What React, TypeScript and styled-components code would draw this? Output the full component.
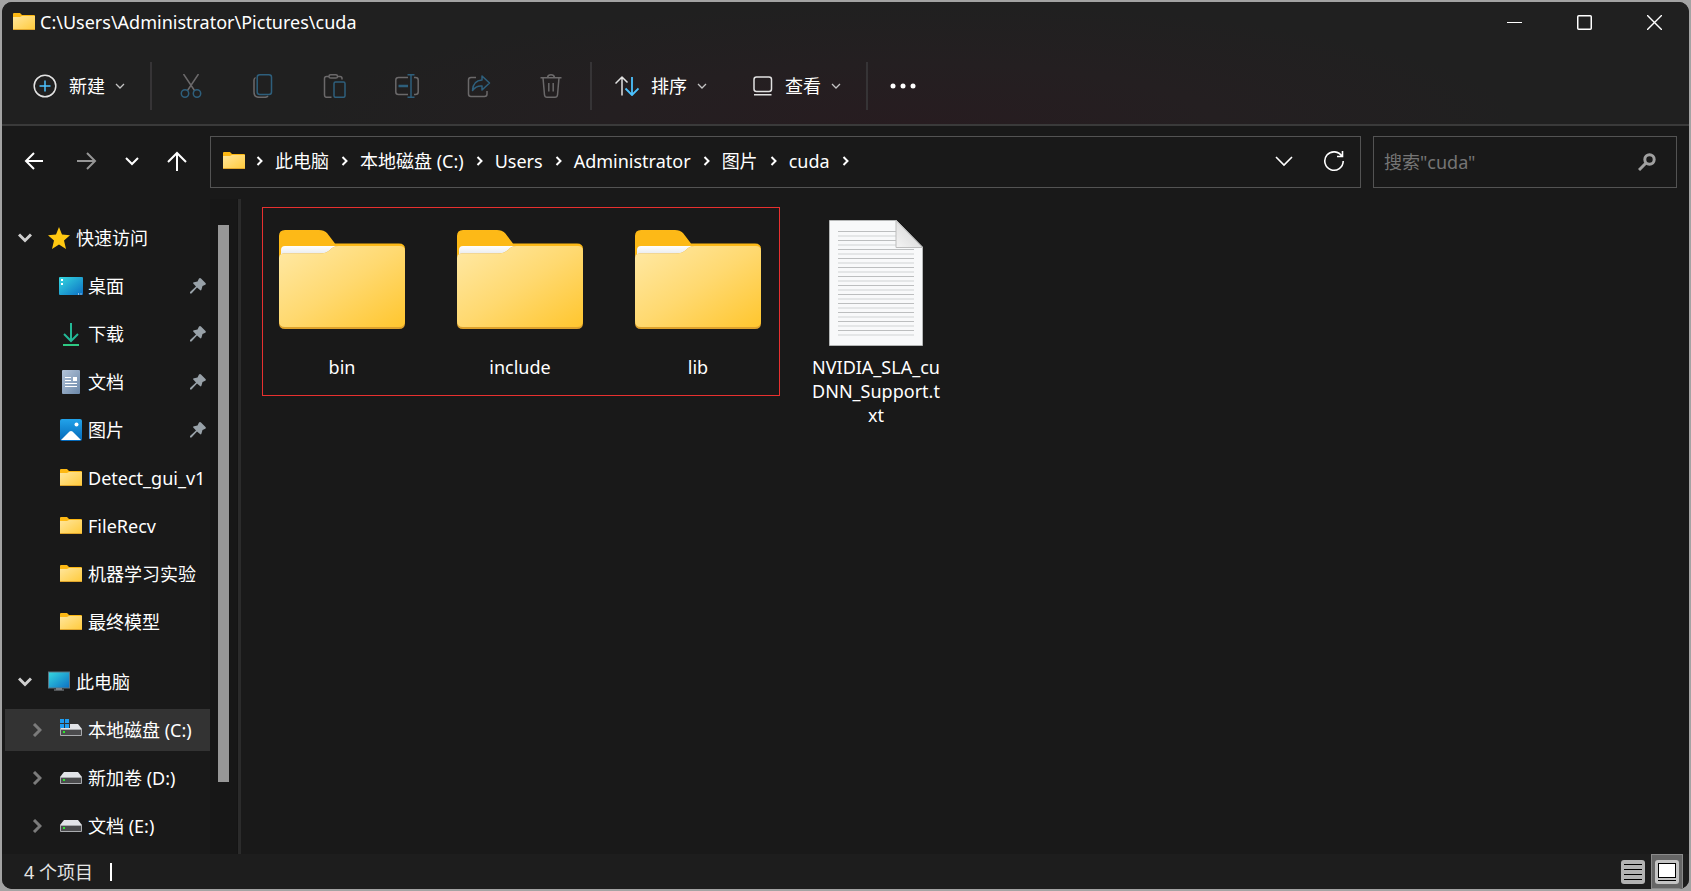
import React from "react";
import styled, { createGlobalStyle } from "styled-components";

const GlobalStyle = createGlobalStyle`
  * { box-sizing: border-box; }
  html, body { margin: 0; padding: 0; background: #a3a3a3; }
  body, button, input {
    font-family: "Noto Sans", "Noto Sans CJK SC", sans-serif;
    font-size: 18px;
    line-height: 24px;
    color: #fff;
  }
  button { background: none; border: 0; padding: 0; margin: 0; cursor: pointer; }
  ul, ol { list-style: none; margin: 0; padding: 0; }
  a { color: inherit; text-decoration: none; }
  svg { display: block; flex: none; }
`;

const Desktop = styled.div`
  display: flex;
  height: 100vh;
  padding: 2px;
`;

const Window = styled.div`
  flex: 1;
  min-width: 0;
  display: flex;
  flex-direction: column;
  background: #191919;
  border-radius: 10px;
  overflow: hidden;
`;

const Chrome = styled.header`
  background: radial-gradient(ellipse 36% 100% at 54% 100%, #271c20 0%, #241f21 50%, #202020 100%);
  border-bottom: 2px solid #3a3a3a;
`;

const TitleBar = styled.div`
  display: flex;
  align-items: center;
  height: 40px;
  padding-left: 11px;
`;

const Title = styled.h1`
  flex: 1;
  margin: 0 0 0 5px;
  font-size: 18px;
  font-weight: 400;
`;

const WindowButton = styled.button`
  display: flex;
  align-items: center;
  justify-content: center;
  width: 70px;
  height: 40px;
`;

const Toolbar = styled.div`
  display: flex;
  align-items: center;
  height: 82px;
  padding: 6px 0 0 31px;
`;

const MenuButton = styled.button<{ $gap: number }>`
  display: flex;
  align-items: center;
  gap: 10px;
  white-space: nowrap;
  > svg:first-child { margin-right: ${(p) => p.$gap}px; }
`;

const ToolGroup = styled.div`
  display: flex;
  gap: 48px;
  padding: 0 27px;
`;

const ViewGroup = styled.div`
  display: flex;
  gap: 44px;
  padding: 0 25px 0 23px;
`;

const Separator = styled.span<{ $before?: number }>`
  width: 2px;
  height: 48px;
  margin-left: ${(p) => p.$before ?? 0}px;
  background: #363436;
`;

const MoreButton = styled.button`
  margin-left: 22px;
`;

const AddressRow = styled.div`
  display: flex;
  align-items: center;
  padding: 10px 12px 11px 22px;
`;

const History = styled.div`
  display: flex;
  align-items: center;
  width: 186px;
  gap: 27px;
  padding-bottom: 2px;
`;

const AddressBox = styled.nav`
  flex: 1;
  min-width: 0;
  display: flex;
  align-items: center;
  height: 52px;
  padding: 0 15px 2px 12px;
  border: 1px solid #535353;
`;

const Crumbs = styled.ol`
  flex: 1;
  display: flex;
  align-items: center;
  white-space: nowrap;
`;

const Crumb = styled.li`
  display: flex;
  align-items: center;
  gap: 12px;
  margin-left: 12px;
  &:first-child { margin-left: 11px; }
`;

const AddressActions = styled.div`
  display: flex;
  align-items: center;
  gap: 30px;
`;

const SearchBox = styled.form`
  flex: 0 0 auto;
  width: 304px;
  min-width: 0;
  display: flex;
  align-items: center;
  height: 52px;
  margin-left: 12px;
  padding: 0 20px 0 10px;
  border: 1px solid #535353;
`;

const SearchInput = styled.input`
  flex: 1;
  width: 0;
  min-width: 0;
  padding: 0;
  border: 0;
  outline: 0;
  background: none;
  &::placeholder { color: #757575; opacity: 1; }
`;

const Body = styled.div`
  flex: 1;
  min-height: 0;
  display: flex;
`;

const Sidebar = styled.nav`
  flex: 0 0 208px;
  display: flex;
  flex-direction: column;
  gap: 18px;
  padding: 18px 0 0 3px;
  overflow: hidden;
`;

const TreeGroup = styled.ul`
  display: flex;
  flex-direction: column;
  gap: 6px;
`;

const TreeRow = styled.li<{ $level: number; $active?: boolean }>`
  display: grid;
  grid-template-columns: ${(p) => (p.$level === 0 ? "43px 22px" : "54px 24px")} 1fr auto;
  align-items: center;
  height: 42px;
  padding-right: 4px;
  background: ${(p) => (p.$active ? "#333333" : "transparent")};
  > a { margin-left: ${(p) => (p.$level === 0 ? 6 : 5)}px; white-space: nowrap; }
`;

const Toggle = styled.button<{ $level: number }>`
  display: flex;
  width: 20px;
  margin-left: ${(p) => (p.$level === 0 ? 13 : 27)}px;
`;

const IconCell = styled.span`
  display: flex;
  justify-content: center;
`;

const ScrollTrack = styled.div`
  flex: 0 0 27px;
  padding: 26px 8px 0;
  background: #171717;
`;

const ScrollThumb = styled.div`
  height: 88.5%;
  background: #979797;
`;

const Splitter = styled.div`
  flex: 0 0 4px;
  border-left: 1px solid #141414;
  background: #2b2b2b;
`;

const Files = styled.main`
  flex: 1;
  display: flex;
  align-items: flex-start;
  gap: 29px;
  padding: 8px 21px;
`;

const Highlight = styled.section`
  display: flex;
  gap: 44px;
  padding: 11px 14px 16px 12px;
  border: 1px solid #e8302f;
`;

const Loose = styled.section`
  padding-top: 12px;
`;

const FileItem = styled.a`
  display: flex;
  flex-direction: column;
  align-items: center;
  gap: 8px;
  width: 134px;
  text-align: center;
  > span { max-width: 100%; overflow-wrap: anywhere; }
`;

const StatusBar = styled.footer`
  display: flex;
  align-items: center;
  height: 35px;
  padding: 0 6px 0 22px;
  background: #1d1d1d;
  color: #e4e4e4;
`;

const StatusMark = styled.span`
  width: 2px;
  height: 18px;
  margin-left: 17px;
  background: #fff;
`;

const ViewButton = styled.button<{ $on?: boolean }>`
  display: flex;
  align-items: center;
  justify-content: center;
  width: 32px;
  height: 35px;
  margin-left: 2px;
  border: 1px solid ${(p) => (p.$on ? "#8a8a8a" : "transparent")};
  background: ${(p) => (p.$on ? "#666666" : "none")};
`;

const Spacer = styled.span`
  flex: 1;
`;

const BLUE = "#4cc2ff";
const DIM = "#6b696a";
const DIM_BLUE = "#2e5f7c";

function SmallFolder() {
  return (
    <svg width="22" height="18" viewBox="0 0 22 18">
      <defs>
        <linearGradient id="small-folder" x1="0" y1="0" x2="1" y2="1">
          <stop offset="0" stopColor="#ffe69c" />
          <stop offset="1" stopColor="#ffca3a" />
        </linearGradient>
      </defs>
      <path d="M0 1Q0 0 1 0H7L9 2H21Q22 2 22 3V16H0Z" fill="#fdb813" />
      <path d="M0 4H7L9 3H22V16Q22 17 21 17H1Q0 17 0 16Z" fill="url(#small-folder)" />
      <path d="M0 16.5H22" stroke="#e0a52c" />
    </svg>
  );
}

function BigFolder() {
  return (
    <svg width="128" height="128" viewBox="0 0 128 128">
      <defs>
        <linearGradient id="folder-front" x1="0" y1="0" x2="1" y2="1">
          <stop offset="0" stopColor="#ffe9a6" />
          <stop offset="0.5" stopColor="#ffd970" />
          <stop offset="1" stopColor="#ffc62e" />
        </linearGradient>
        <linearGradient id="folder-paper" x1="0" y1="0" x2="0" y2="1">
          <stop offset="0" stopColor="#ffffff" />
          <stop offset="1" stopColor="#dcdfe4" />
        </linearGradient>
      </defs>
      <path d="M1 17Q1 11 7 11H41Q46 11 49 14L57 24.500H121Q127 24.500 127 30V60H1Z" fill="#fdb917" />
      <path d="M3 40V31Q3 27 7 27H60L50 36H3Z" fill="url(#folder-paper)" />
      <path d="M1 104V39Q1 34.500 6 34.500H42Q48 34.500 52 31L54 29Q57 27 60 27H122Q127 27 127 32V104Q127 110 121 110H7Q1 110 1 104Z" fill="#dda12c" />
      <path d="M1 102V39Q1 34.500 6 34.500H42Q48 34.500 52 31L54 29Q57 27 60 27H122Q127 27 127 32V102Q127 108 121 108H7Q1 108 1 102Z" fill="url(#folder-front)" />
    </svg>
  );
}

function TextDocument() {
  const rows = Array.from({ length: 12 }, (_, i) => 12.5 + i * 9);
  return (
    <svg width="128" height="128" viewBox="0 0 128 128">
      <defs>
        <linearGradient id="fold" x1="0" y1="1" x2="1" y2="0">
          <stop offset="0" stopColor="#f4f4f4" />
          <stop offset="1" stopColor="#cfcfcf" />
        </linearGradient>
      </defs>
      <path d="M17.500 1.500H84.500L110.500 28V126.500H17.500Z" fill="#f8f9fa" stroke="#b5b7b7" />
      {rows.map((y, i) => (
        <g key={y}>
          <path d={`M26 ${y}H${i < 2 ? 84 : 102}`} stroke="#bcbebf" />
          <path d={`M26 ${y + 4.5}H${i < 2 ? 84 : 102}`} stroke="#e4e6e7" strokeWidth="2" />
        </g>
      ))}
      <path d="M84 1.500V28.500H110.500Z" fill="url(#fold)" stroke="#bdbdbd" />
    </svg>
  );
}

function Drive({ system }: { system?: boolean }) {
  return (
    <svg width="22" height="24" viewBox="0 0 22 24">
      <path d="M4 6H18L22 11V12H0V11Z" fill="#e2e4e8" />
      <path d="M0.500 11.500H21.500V17.500H0.500Z" fill="#4b4b4d" stroke="#a9abae" />
      <rect x="3" y="13" width="2" height="2" fill="#2ee62e" />
      {system && (
        <>
          <rect x="0" y="0" width="10" height="10" fill="#333" />
          <path d="M0 1H4V5H0ZM5 1H9V5H5ZM0 6H4V10H0ZM5 6H9V10H5Z" fill="#1f9df0" />
        </>
      )}
    </svg>
  );
}

function Star() {
  return (
    <svg width="22" height="22" viewBox="0 0 22 22">
      <path d="M11 0L14 7.500L22 8.200L16 13.500L18 22L11 17.500L4 22L6 13.500L0 8.200L8 7.500Z" fill="#ffc811" />
    </svg>
  );
}

function Monitor() {
  return (
    <svg width="22" height="22" viewBox="0 0 22 22">
      <defs>
        <linearGradient id="screen" x1="0" y1="0" x2="1" y2="1">
          <stop offset="0" stopColor="#35d8e0" />
          <stop offset="1" stopColor="#0c6fc4" />
        </linearGradient>
      </defs>
      <rect x="0.500" y="1" width="21" height="16" fill="url(#screen)" stroke="#5d7482" />
      <path d="M8 17.500H14V18.500H8Z" fill="#b5bcc4" />
      <path d="M6 19H16" stroke="#8b9298" />
    </svg>
  );
}

function DesktopIcon() {
  return (
    <svg width="24" height="18" viewBox="0 0 24 18">
      <defs>
        <linearGradient id="wallpaper" x1="0" y1="0" x2="1" y2="1">
          <stop offset="0" stopColor="#35d8e0" />
          <stop offset="1" stopColor="#0c6fc4" />
        </linearGradient>
      </defs>
      <rect width="24" height="18" rx="1" fill="url(#wallpaper)" />
      <path d="M2 2H4V4H2ZM2 6H4V8H2Z" fill="#fff" />
      <path d="M19 17H20M21.500 17H22.500" stroke="#fff" />
    </svg>
  );
}

function Download() {
  return (
    <svg width="16" height="23" viewBox="0 0 16 23" fill="none" strokeWidth="2">
      <path d="M8 0V17M1 11L8 18L15 11" stroke="#23b896" />
      <path d="M0 22H16" stroke="#2ec983" />
    </svg>
  );
}

function DocumentIcon() {
  return (
    <svg width="18" height="24" viewBox="0 0 18 24">
      <defs>
        <linearGradient id="doc" x1="0" y1="0" x2="1" y2="1">
          <stop offset="0" stopColor="#b3c3d8" />
          <stop offset="1" stopColor="#6b88a9" />
        </linearGradient>
      </defs>
      <rect width="18" height="24" rx="1" fill="url(#doc)" />
      <path d="M3 7.500H9M3 10.500H9M3 13.500H15M3 16.500H15" stroke="#fff" />
      <rect x="11" y="7" width="4" height="4" fill="#fff" />
    </svg>
  );
}

function PictureIcon() {
  return (
    <svg width="22" height="22" viewBox="0 0 22 22">
      <defs>
        <linearGradient id="photo" x1="0" y1="0" x2="0" y2="1">
          <stop offset="0" stopColor="#22a3ea" />
          <stop offset="1" stopColor="#0468b8" />
        </linearGradient>
      </defs>
      <rect width="22" height="22" rx="2" fill="url(#photo)" />
      <circle cx="16.500" cy="5.500" r="2" fill="#fff" />
      <path d="M1 21L9.500 12.500Q11 11.500 12.500 12.500L21 21Z" fill="#fff" />
    </svg>
  );
}

function Pin() {
  return (
    <svg width="16" height="16" viewBox="0 0 16 16">
      <path d="M9 0.500Q10 -0.300 11 0.500L15.500 5Q16.300 6 15.300 6.800L12.500 8L11.500 11.500Q11 13 10 12L7 9.500L1.500 15.500H0V14L6 8.500L3.500 5.800Q2.500 4.500 4 4.200L7.500 3.500Z" fill="#98a1a8" />
    </svg>
  );
}

function Chevron({ color = "#c4c4c4" }: { color?: string }) {
  return (
    <svg width="10" height="8" viewBox="0 0 10 8" fill="none" stroke={color} strokeWidth="1.300">
      <path d="M1 2L5 6L9 2" />
    </svg>
  );
}

function CrumbArrow() {
  return (
    <svg width="7" height="10" viewBox="0 0 7 10" fill="none" stroke="#fff" strokeWidth="2">
      <path d="M1.500 1L5.500 5L1.500 9" />
    </svg>
  );
}

function TreeArrow({ open }: { open?: boolean }) {
  return open ? (
    <svg width="14" height="10" viewBox="0 0 14 10" fill="none" stroke="#cfcfcf" strokeWidth="3">
      <path d="M1 1.500L7 7.500L13 1.500" />
    </svg>
  ) : (
    <svg width="10" height="14" viewBox="0 0 10 14" fill="none" stroke="#7b7b7b" strokeWidth="3">
      <path d="M2 1L8 7L2 13" />
    </svg>
  );
}

function ToolIcon({ children }: { children: React.ReactNode }) {
  return (
    <svg width="24" height="24" viewBox="0 0 24 24" fill="none" strokeWidth="1.500" strokeLinejoin="round">
      {children}
    </svg>
  );
}

const tools = [
  {
    label: "剪切",
    icon: (
      <>
        <path d="M4.500 0L15.500 16.500M19.500 0L8.500 16.500" stroke={DIM} />
        <circle cx="6" cy="19.500" r="3.700" stroke={DIM_BLUE} />
        <circle cx="18" cy="19.500" r="3.700" stroke={DIM_BLUE} />
      </>
    ),
  },
  {
    label: "复制",
    icon: (
      <>
        <path d="M4.500 3.500Q3 4.500 3 6V18Q3 23.300 8 23.300H14Q16 23.300 17 22" stroke={DIM} />
        <rect x="6.200" y="0.800" width="14.300" height="19.700" rx="2.500" stroke={DIM_BLUE} />
      </>
    ),
  },
  {
    label: "粘贴",
    icon: (
      <>
        <path d="M6 2.500H3.500Q1.500 2.500 1.500 4.500V21Q1.500 23.300 3.500 23.300H8.500M14 2.500H17Q19 2.500 19 4.500V5.500" stroke={DIM} />
        <rect x="6" y="0.800" width="8.500" height="3.200" rx="1.600" stroke={DIM} />
        <rect x="11" y="8" width="11" height="15.300" rx="1.500" stroke={DIM_BLUE} />
      </>
    ),
  },
  {
    label: "重命名",
    icon: (
      <>
        <path d="M13 3.500H3.500Q0.800 3.500 0.800 6V18Q0.800 20.500 3.500 20.500H13M19 3.500H20.500Q23.200 3.500 23.200 6V18Q23.200 20.500 20.500 20.500H19" stroke={DIM} />
        <path d="M12.500 0.800H19.500M12.500 23.200H19.500M16 0.800V23.200" stroke={DIM_BLUE} />
        <path d="M3.500 12H13" stroke={DIM_BLUE} strokeWidth="2.500" />
      </>
    ),
  },
  {
    label: "共享",
    icon: (
      <>
        <path d="M9 3.500H4Q1.500 3.500 1.500 6V20Q1.500 22.500 4 22.500H17.500Q20 22.500 20 20V17" stroke={DIM} />
        <path d="M15 2L22.500 9L15 16V12Q9 11.500 5.500 16.500Q6 6.500 15 6Z" stroke={DIM_BLUE} />
      </>
    ),
  },
  {
    label: "删除",
    icon: (
      <path
        d="M1.500 3.800H22.500M4 3.800L5.500 21Q5.800 23.200 8 23.200H16Q18.200 23.200 18.500 21L20 3.800M8.500 3.500Q9 0.800 12 0.800T15.500 3.500M9.800 9V17.500M14.200 9V17.500"
        stroke={DIM}
      />
    ),
  },
];

const crumbs = ["此电脑", "本地磁盘 (C:)", "Users", "Administrator", "图片", "cuda"];

const quickAccess = [
  { name: "桌面", icon: <DesktopIcon />, pinned: true },
  { name: "下载", icon: <Download />, pinned: true },
  { name: "文档", icon: <DocumentIcon />, pinned: true },
  { name: "图片", icon: <PictureIcon />, pinned: true },
  { name: "Detect_gui_v1", icon: <SmallFolder /> },
  { name: "FileRecv", icon: <SmallFolder /> },
  { name: "机器学习实验", icon: <SmallFolder /> },
  { name: "最终模型", icon: <SmallFolder /> },
];

const drives = [
  { name: "本地磁盘 (C:)", system: true },
  { name: "新加卷 (D:)" },
  { name: "文档 (E:)" },
];

export default function App() {
  return (
    <>
      <GlobalStyle />
      <Desktop>
        <Window>
          <Chrome>
            <TitleBar>
              <SmallFolder />
              <Title>C:\Users\Administrator\Pictures\cuda</Title>
              <WindowButton aria-label="最小化">
                <svg width="15" height="15" stroke="#fff"><path d="M0 7.500H15" /></svg>
              </WindowButton>
              <WindowButton aria-label="最大化">
                <svg width="15" height="15" stroke="#fff" fill="none" strokeWidth="1.500"><rect x="0.750" y="0.750" width="13.500" height="13.500" rx="1" /></svg>
              </WindowButton>
              <WindowButton aria-label="关闭">
                <svg width="15" height="15" stroke="#fff" strokeWidth="1.400"><path d="M0 0L15 15M15 0L0 15" /></svg>
              </WindowButton>
            </TitleBar>
            <Toolbar>
              <MenuButton $gap={2}>
                <ToolIcon>
                  <circle cx="12" cy="12" r="10.800" stroke="#e2e2e2" />
                  <path d="M12 6.500V17.500M6.500 12H17.500" stroke={BLUE} />
                </ToolIcon>
                新建
                <Chevron />
              </MenuButton>
              <Separator $before={25} />
              <ToolGroup>
                {tools.map((t) => (
                  <button key={t.label} aria-label={t.label} disabled>
                    <ToolIcon>{t.icon}</ToolIcon>
                  </button>
                ))}
              </ToolGroup>
              <Separator />
              <ViewGroup>
                <MenuButton $gap={2}>
                  <ToolIcon>
                    <path d="M7 21.500V3M0.500 9.500L7 3L12.500 8.500" stroke="#e2e2e2" />
                    <path d="M17 3V21M10.500 14.500L17 21L23.500 14.500" stroke={BLUE} strokeWidth="1.800" />
                  </ToolIcon>
                  排序
                  <Chevron />
                </MenuButton>
                <MenuButton $gap={0}>
                  <ToolIcon>
                    <rect x="3" y="3" width="17.500" height="14.500" rx="2.500" stroke="#e2e2e2" />
                    <path d="M3 20.800H20.500" stroke="#e2e2e2" />
                  </ToolIcon>
                  查看
                  <Chevron />
                </MenuButton>
              </ViewGroup>
              <Separator />
              <MoreButton aria-label="更多">
                <svg width="26" height="6" viewBox="0 0 26 6" fill="#fff">
                  <circle cx="3" cy="3" r="2.500" />
                  <circle cx="13" cy="3" r="2.500" />
                  <circle cx="23" cy="3" r="2.500" />
                </svg>
              </MoreButton>
            </Toolbar>
          </Chrome>

          <AddressRow>
            <History>
              <button aria-label="后退">
                <svg width="20" height="20" viewBox="0 0 20 20" fill="none" stroke="#fff" strokeWidth="2"><path d="M19 10H2M10 2L2 10L10 18" /></svg>
              </button>
              <button aria-label="前进">
                <svg width="26" height="20" viewBox="0 0 26 20" fill="none" stroke="#969696" strokeWidth="2"><path d="M6 10H24M16 2L24 10L16 18" /></svg>
              </button>
              <button aria-label="最近位置">
                <svg width="16" height="20" viewBox="0 0 16 20" fill="none" stroke="#fff" strokeWidth="2"><path d="M2 7L8 13L14 7" /></svg>
              </button>
              <button aria-label="上移">
                <svg width="20" height="20" viewBox="0 0 20 20" fill="none" stroke="#fff" strokeWidth="2"><path d="M10 20V2M1 11L10 2L19 11" /></svg>
              </button>
            </History>
            <AddressBox aria-label="地址">
              <SmallFolder />
              <Crumbs>
                <Crumb><CrumbArrow /></Crumb>
                {crumbs.map((c) => (
                  <Crumb key={c}>
                    <a href="#">{c}</a>
                    <CrumbArrow />
                  </Crumb>
                ))}
              </Crumbs>
              <AddressActions>
                <button aria-label="历史记录">
                  <svg width="18" height="12" viewBox="0 0 18 12" fill="none" stroke="#fff" strokeWidth="1.600"><path d="M1 2L9 10L17 2" /></svg>
                </button>
                <button aria-label="刷新">
                  <svg width="22" height="22" viewBox="0 0 22 22" fill="none" stroke="#fff" strokeWidth="1.600">
                    <path d="M19 6.500A9.200 9.200 0 1 0 20.200 11M19.500 1V6.500H14" />
                  </svg>
                </button>
              </AddressActions>
            </AddressBox>
            <SearchBox>
              <SearchInput aria-label="搜索" placeholder={'搜索"cuda"'} />
              <button type="button" aria-label="开始搜索">
                <svg width="18" height="18" viewBox="0 0 18 18" fill="none" stroke="#a0a0a0" strokeWidth="3">
                  <circle cx="11.500" cy="6.500" r="4.700" />
                  <path d="M8 10L1 17" />
                </svg>
              </button>
            </SearchBox>
          </AddressRow>

          <Body>
            <Sidebar aria-label="导航窗格">
              <TreeGroup>
                <TreeRow $level={0}>
                  <Toggle $level={0} aria-label="折叠"><TreeArrow open /></Toggle>
                  <IconCell><Star /></IconCell>
                  <a href="#">快速访问</a>
                </TreeRow>
                {quickAccess.map((q) => (
                  <TreeRow key={q.name} $level={1}>
                    <span />
                    <IconCell>{q.icon}</IconCell>
                    <a href="#">{q.name}</a>
                    {q.pinned && <Pin />}
                  </TreeRow>
                ))}
              </TreeGroup>
              <TreeGroup>
                <TreeRow $level={0}>
                  <Toggle $level={0} aria-label="折叠"><TreeArrow open /></Toggle>
                  <IconCell><Monitor /></IconCell>
                  <a href="#">此电脑</a>
                </TreeRow>
                {drives.map((d) => (
                  <TreeRow key={d.name} $level={1} $active={d.system}>
                    <Toggle $level={1} aria-label="展开"><TreeArrow /></Toggle>
                    <IconCell><Drive system={d.system} /></IconCell>
                    <a href="#">{d.name}</a>
                  </TreeRow>
                ))}
              </TreeGroup>
            </Sidebar>
            <ScrollTrack><ScrollThumb /></ScrollTrack>
            <Splitter />
            <Files>
              <Highlight>
                {["bin", "include", "lib"].map((n) => (
                  <FileItem key={n} href="#">
                    <BigFolder />
                    <span>{n}</span>
                  </FileItem>
                ))}
              </Highlight>
              <Loose>
                <FileItem href="#">
                  <TextDocument />
                  <span>NVIDIA_SLA_cuDNN_Support.txt</span>
                </FileItem>
              </Loose>
            </Files>
          </Body>

          <StatusBar>
            <span>4 个项目</span>
            <StatusMark />
            <Spacer />
            <ViewButton aria-label="详细信息">
              <svg width="24" height="24" viewBox="0 0 24 24">
                <rect width="24" height="24" rx="3" fill="#b3b3b3" />
                <path d="M3 4.500H21M3 9.500H21M3 14.500H21M3 19.500H21" stroke="#000" />
              </svg>
            </ViewButton>
            <ViewButton $on aria-label="大图标">
              <svg width="24" height="24" viewBox="0 0 24 24">
                <rect width="24" height="24" rx="3" fill="#c4c4c4" />
                <rect x="3.500" y="3.500" width="17" height="14" fill="#fff" stroke="#000" />
                <path d="M3 20.500H21" stroke="#000" />
              </svg>
            </ViewButton>
          </StatusBar>
        </Window>
      </Desktop>
    </>
  );
}
